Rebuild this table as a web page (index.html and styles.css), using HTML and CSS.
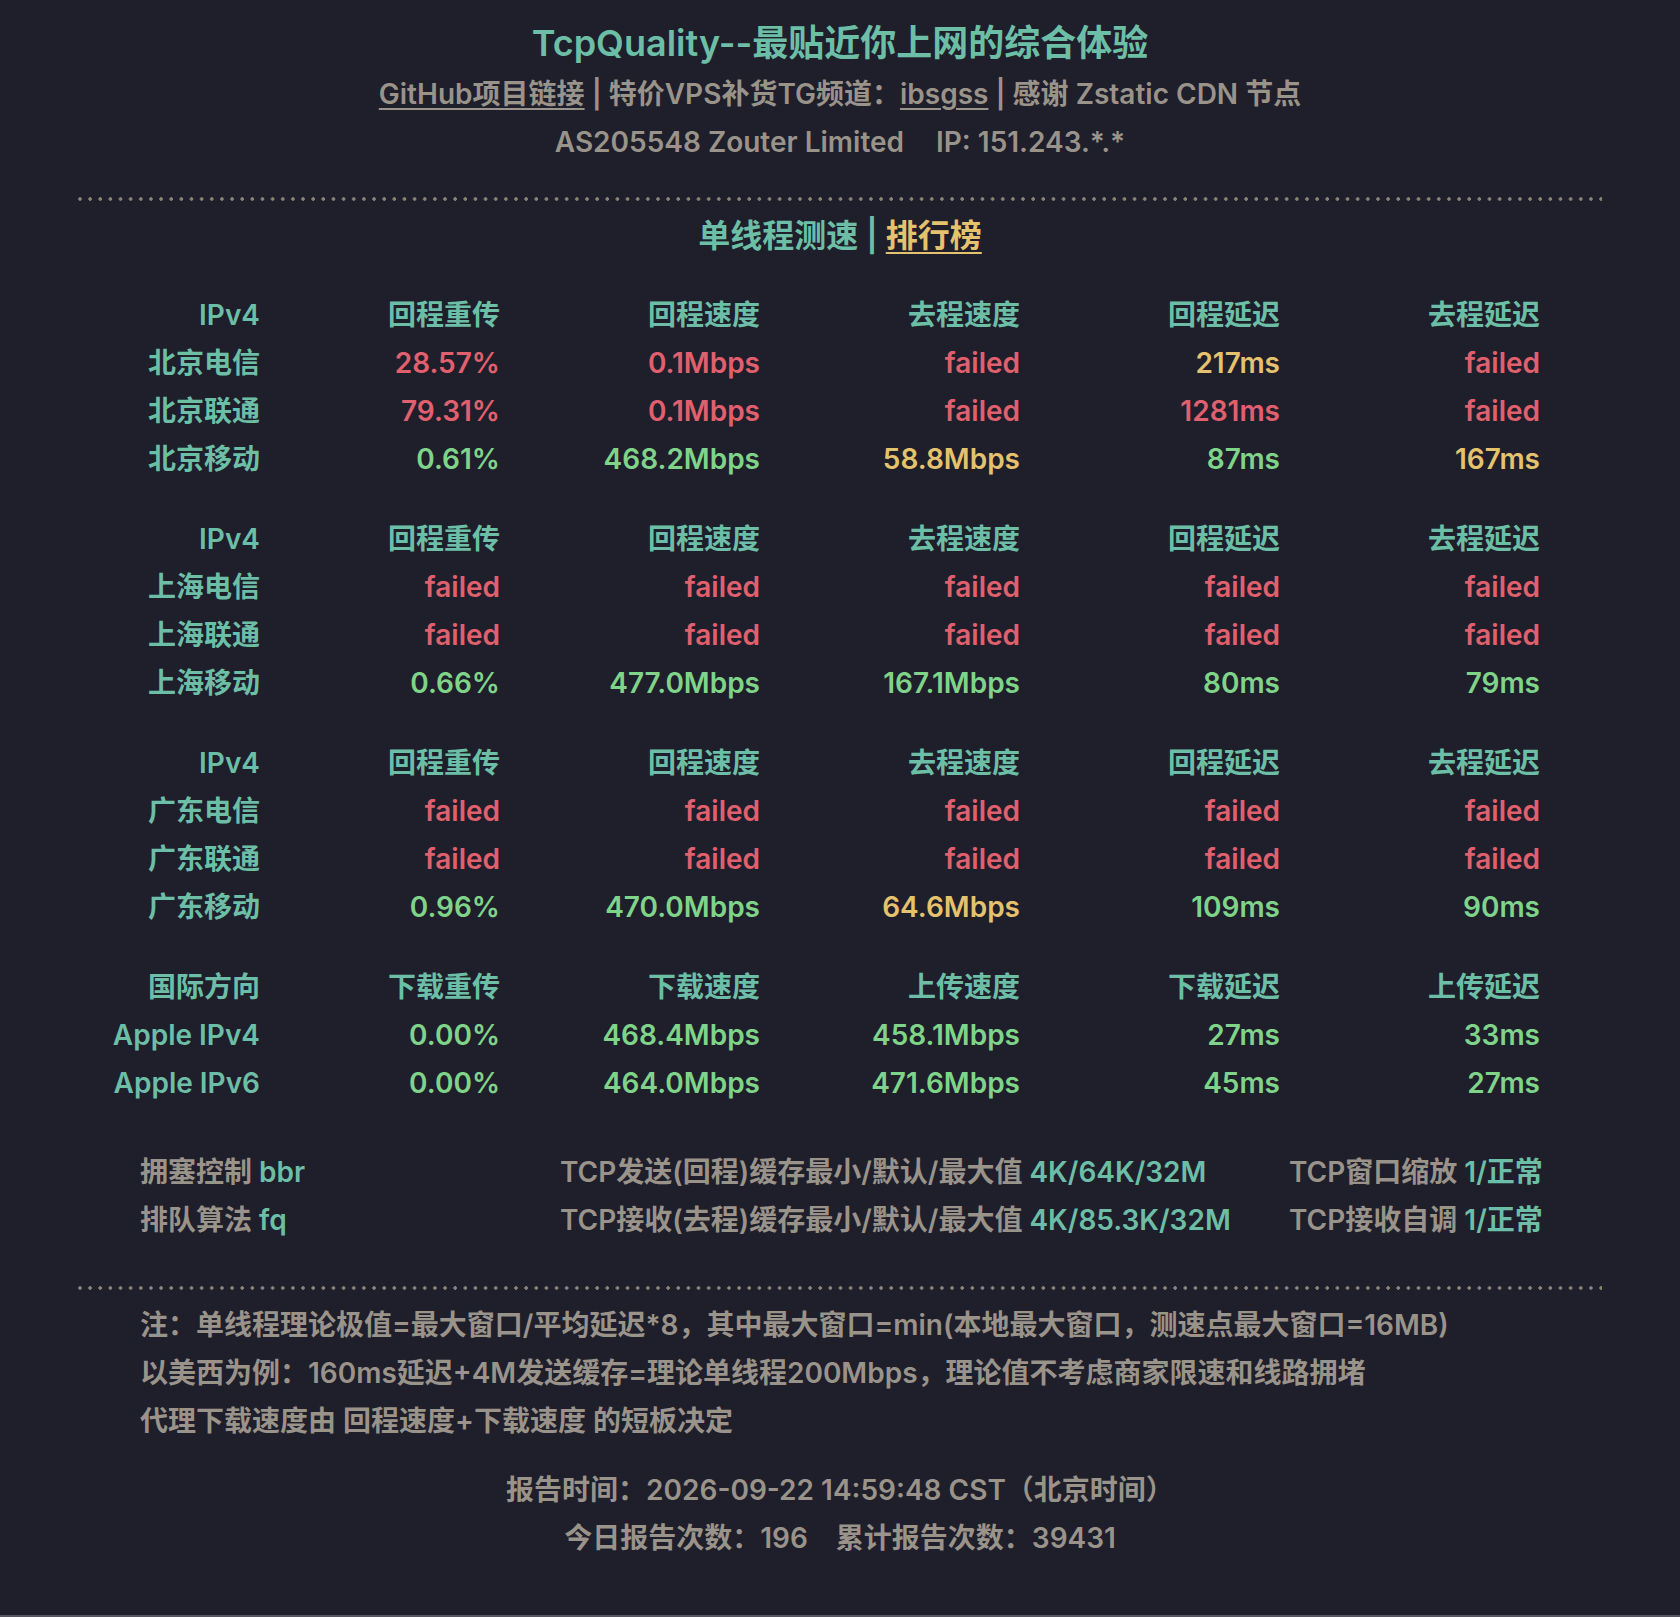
FILE: index.html
```html
<!DOCTYPE html>
<html lang="zh-CN">
<head>
<meta charset="utf-8">
<title>TcpQuality</title>
<link rel="stylesheet" href="styles.css">
</head>
<body>
<div class="page">
  <header class="head">
    <h1 class="title">TcpQuality--最贴近你上网的综合体验</h1>
    <p class="sub"><a class="lnk">GitHub项目链接</a> <span class="bar">|</span> 特价VPS补货TG频道：<a class="lnk">ibsgss</a> <span class="bar">|</span> 感谢 Zstatic CDN 节点</p>
    <p class="sub">AS205548 Zouter Limited<span class="gap"></span>IP: 151.243.*.*</p>
  </header>

  <div class="dots"></div>

  <h2 class="section">单线程测速 <span class="pipe">|</span> <a class="rank">排行榜</a></h2>

  <div class="groups">
    <div class="grp">
      <span class="th">IPv4</span><span class="th">回程重传</span><span class="th">回程速度</span><span class="th">去程速度</span><span class="th">回程延迟</span><span class="th">去程延迟</span>
      <span class="th">北京电信</span><span class="bad">28.57%</span><span class="bad">0.1Mbps</span><span class="bad">failed</span><span class="mid">217ms</span><span class="bad">failed</span>
      <span class="th">北京联通</span><span class="bad">79.31%</span><span class="bad">0.1Mbps</span><span class="bad">failed</span><span class="bad">1281ms</span><span class="bad">failed</span>
      <span class="th">北京移动</span><span class="ok">0.61%</span><span class="ok">468.2Mbps</span><span class="mid">58.8Mbps</span><span class="ok">87ms</span><span class="mid">167ms</span>
    </div>
    <div class="grp">
      <span class="th">IPv4</span><span class="th">回程重传</span><span class="th">回程速度</span><span class="th">去程速度</span><span class="th">回程延迟</span><span class="th">去程延迟</span>
      <span class="th">上海电信</span><span class="bad">failed</span><span class="bad">failed</span><span class="bad">failed</span><span class="bad">failed</span><span class="bad">failed</span>
      <span class="th">上海联通</span><span class="bad">failed</span><span class="bad">failed</span><span class="bad">failed</span><span class="bad">failed</span><span class="bad">failed</span>
      <span class="th">上海移动</span><span class="ok">0.66%</span><span class="ok">477.0Mbps</span><span class="ok">167.1Mbps</span><span class="ok">80ms</span><span class="ok">79ms</span>
    </div>
    <div class="grp">
      <span class="th">IPv4</span><span class="th">回程重传</span><span class="th">回程速度</span><span class="th">去程速度</span><span class="th">回程延迟</span><span class="th">去程延迟</span>
      <span class="th">广东电信</span><span class="bad">failed</span><span class="bad">failed</span><span class="bad">failed</span><span class="bad">failed</span><span class="bad">failed</span>
      <span class="th">广东联通</span><span class="bad">failed</span><span class="bad">failed</span><span class="bad">failed</span><span class="bad">failed</span><span class="bad">failed</span>
      <span class="th">广东移动</span><span class="ok">0.96%</span><span class="ok">470.0Mbps</span><span class="mid">64.6Mbps</span><span class="ok">109ms</span><span class="ok">90ms</span>
    </div>
    <div class="grp">
      <span class="th">国际方向</span><span class="th">下载重传</span><span class="th">下载速度</span><span class="th">上传速度</span><span class="th">下载延迟</span><span class="th">上传延迟</span>
      <span class="th">Apple IPv4</span><span class="ok">0.00%</span><span class="ok">468.4Mbps</span><span class="ok">458.1Mbps</span><span class="ok">27ms</span><span class="ok">33ms</span>
      <span class="th">Apple IPv6</span><span class="ok">0.00%</span><span class="ok">464.0Mbps</span><span class="ok">471.6Mbps</span><span class="ok">45ms</span><span class="ok">27ms</span>
    </div>
  </div>

  <div class="tcp">
    <span>拥塞控制 <b>bbr</b></span>
    <span>TCP发送(回程)缓存最小/默认/最大值 <b>4K/64K/32M</b></span>
    <span>TCP窗口缩放 <b>1/正常</b></span>
    <span>排队算法 <b>fq</b></span>
    <span>TCP接收(去程)缓存最小/默认/最大值 <b>4K/85.3K/32M</b></span>
    <span>TCP接收自调 <b>1/正常</b></span>
  </div>

  <div class="dots dots2"></div>

  <div class="notes">
    <p>注：单线程理论极值=最大窗口/平均延迟*8，其中最大窗口=min(本地最大窗口，测速点最大窗口=16MB)</p>
    <p>以美西为例：160ms延迟+4M发送缓存=理论单线程200Mbps，理论值不考虑商家限速和线路拥堵</p>
    <p>代理下载速度由 回程速度+下载速度 的短板决定</p>
  </div>

  <footer class="foot">
    <p>报告时间：2026-09-22 14:59:48 CST（北京时间）</p>
    <p>今日报告次数：196<span class="gap2"></span>累计报告次数：39431</p>
  </footer>
</div>
</body>
</html>
```

FILE: styles.css
```css
html {
  background: #55545f;
}
body {
  margin: 0;
  background: #1f1e2b;
  min-height: 1615px;
  font-family: Inter, "Noto Sans CJK SC", sans-serif;
  font-weight: 600;
  color: #99938a;
}
.page {
  padding: 16px 78px 0;
}
p, h1, h2 {
  margin: 0;
}
.head {
  text-align: center;
}
.title {
  font-size: 36px;
  line-height: 54px;
  font-weight: 600;
  color: #6cbea6;
}
.sub {
  font-size: 28px;
  line-height: 48px;
  color: #99938a;
}
.lnk {
  color: #99938a;
  text-decoration: underline;
  text-decoration-thickness: 2px;
  text-underline-offset: 4px;
}
.bar {
  color: #99938a;
}
.gap {
  display: inline-block;
  width: 32px;
}
.dots {
  margin-top: 31px;
  height: 4px;
  background-image: radial-gradient(circle at 2px 2px, #8a8579 1.5px, transparent 2px);
  background-size: 10.15px 4px;
  background-repeat: repeat-x;
  margin-bottom: 11px;
}
.section {
  text-align: center;
  font-size: 32px;
  line-height: 48px;
  font-weight: 600;
  color: #6cbea6;
}
.pipe {
  color: #6cbea6;
}
.rank {
  color: #e4c26e;
  text-decoration: underline;
  text-decoration-thickness: 2px;
  text-underline-offset: 5px;
}
.groups {
  margin-top: 31px;
  display: flex;
  flex-direction: column;
  gap: 32px;
}
.grp {
  display: grid;
  grid-template-columns: 182px 240px 260px 260px 260px 260px;
  font-size: 28px;
  line-height: 48px;
  text-align: right;
}
.th {
  color: #6cbea6;
}
.bad {
  color: #e0606e;
}
.ok {
  color: #7fd48a;
}
.mid {
  color: #e4c26e;
}
.tcp {
  margin-top: 41px;
  padding-left: 62px;
  display: grid;
  grid-template-columns: 420px 729px auto;
  font-size: 28px;
  line-height: 48px;
  color: #99938a;
}
.tcp b {
  font-weight: 600;
  color: #6cbea6;
}
.dots2 {
  margin-top: 42px;
}
.notes {
  padding-left: 62px;
  font-size: 28px;
  line-height: 48px;
  color: #99938a;
}
.foot {
  margin-top: 21px;
  text-align: center;
  font-size: 28px;
  line-height: 48px;
  color: #99938a;
}
.gap2 {
  display: inline-block;
  width: 28px;
}
```
